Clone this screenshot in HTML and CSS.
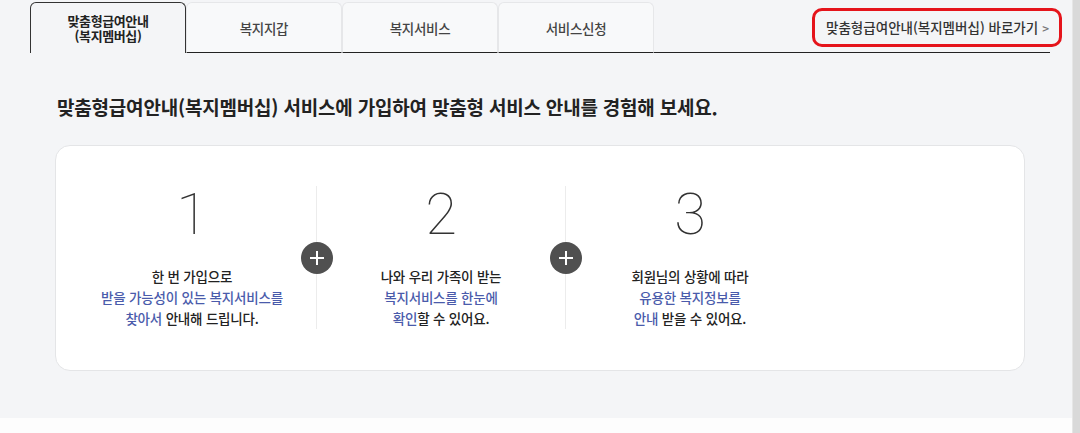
FILE: index.html
```html
<!DOCTYPE html>
<html lang="ko">

<head>
    <meta charset="UTF-8">
    <meta name="viewport" content="width=device-width, initial-scale=1.0">
    <title>맞춤형급여안내(복지멤버십)</title>
    <link rel="stylesheet" href="styles.css">
</head>

<body>
    <div class="page">
        <main class="content">
            <div class="tab-bar">
                <ul class="tabs">
                    <li class="tab active"><a href="#">맞춤형급여안내<br>(복지멤버십)</a></li>
                    <li class="tab"><a href="#">복지지갑</a></li>
                    <li class="tab"><a href="#">복지서비스</a></li>
                    <li class="tab"><a href="#">서비스신청</a></li>
                </ul>
                <div class="tab-fill">
                    <a class="shortcut" href="#">맞춤형급여안내(복지멤버십) 바로가기 <span class="arrow">&gt;</span></a>
                </div>
            </div>

            <h2 class="intro">맞춤형급여안내(복지멤버십) 서비스에 가입하여 맞춤형 서비스 안내를 경험해 보세요.</h2>

            <section class="steps">
                <div class="step">
                    <div class="step-num">1</div>
                    <p class="step-text">한 번 가입으로<br><em>받을 가능성이 있는 복지서비스를</em><br><em>찾아서</em> 안내해 드립니다.</p>
                </div>
                <div class="step-sep">
                    <svg class="plus" width="32" height="32" viewBox="0 0 32 32">
                        <circle cx="16" cy="16" r="16" fill="#505050" />
                        <path d="M16 9v14M9 16h14" stroke="#fff" stroke-width="2" />
                    </svg>
                </div>
                <div class="step">
                    <div class="step-num">2</div>
                    <p class="step-text">나와 우리 가족이 받는<br><em>복지서비스를 한눈에</em><br><em>확인</em>할 수 있어요.</p>
                </div>
                <div class="step-sep">
                    <svg class="plus" width="32" height="32" viewBox="0 0 32 32">
                        <circle cx="16" cy="16" r="16" fill="#505050" />
                        <path d="M16 9v14M9 16h14" stroke="#fff" stroke-width="2" />
                    </svg>
                </div>
                <div class="step">
                    <div class="step-num">3</div>
                    <p class="step-text">회원님의 상황에 따라<br><em>유용한 복지정보를</em><br><em>안내</em> 받을 수 있어요.</p>
                </div>
            </section>
        </main>
        <div class="scrollbar"></div>
    </div>
</body>

</html>
```

FILE: styles.css
```css
* {
    margin: 0;
    padding: 0;
    box-sizing: border-box;
}

body {
    background-color: #fdfdfd;
    font-family: "Noto Sans CJK KR", "Noto Sans", sans-serif;
    color: #222;
}

a {
    color: inherit;
    text-decoration: none;
}

ul {
    list-style: none;
}

.page {
    display: flex;
    height: 433px;
}

.content {
    flex: 1;
    height: 418px;
    background-color: #f4f5f7;
}

.scrollbar {
    width: 8px;
    background-color: #d9d9d9;
    border-left: 1px solid #e6e6e6;
}

/* tabs */
.tab-bar {
    display: flex;
    margin: 0 22px 0 30px;
    padding-top: 2px;
    height: 53px;
}

.tabs {
    display: flex;
}

.tab {
    width: 156px;
    border: 1px solid #e6e7e9;
    border-bottom: 1px solid #222;
    border-radius: 6px 6px 0 0;
    background-color: #f8f9fa;
}

.tab a {
    display: flex;
    align-items: center;
    justify-content: center;
    height: 100%;
    font-size: 13.5px;
    font-weight: 500;
    letter-spacing: -0.3px;
    color: #444;
    text-align: center;
}

.tab.active {
    border-color: #333;
    border-bottom: none;
    background-color: #f4f5f7;
}

.tab.active a {
    font-size: 13px;
    font-weight: 700;
    line-height: 15px;
    letter-spacing: -0.4px;
    color: #222;
}

.tab-fill {
    flex: 1;
    display: flex;
    align-items: center;
    justify-content: flex-end;
    border-bottom: 1px solid #222;
}

.shortcut {
    display: flex;
    align-items: center;
    height: 39px;
    margin-right: -12px;
    padding: 0 10px 0 11px;
    border: 3px solid #e5141b;
    border-radius: 10px;
    font-size: 13.5px;
    font-weight: 500;
    color: #333;
}

.shortcut .arrow {
    margin-left: 4px;
    color: #777;
    font-size: 12px;
}

/* intro */
.intro {
    margin: 40px 0 24px 57px;
    font-size: 19px;
    line-height: 28px;
    font-weight: 700;
    letter-spacing: -0.2px;
    color: #222;
}

/* steps card */
.steps {
    display: flex;
    width: 970px;
    margin-left: 55px;
    padding: 40px 12px 41px;
    background-color: #fff;
    border: 1px solid #e4e5e7;
    border-radius: 15px;
}

.step {
    width: 248px;
    text-align: center;
}

.step-num {
    font-family: Roboto, "Noto Sans CJK KR", sans-serif;
    font-size: 58px;
    line-height: 56px;
    font-weight: 100;
    color: #333;
}

.step-text {
    margin-top: 24px;
    font-size: 13.5px;
    line-height: 21px;
    font-weight: 500;
    letter-spacing: -0.2px;
    color: #222;
}

.step-text em {
    font-style: normal;
    color: #4a5bab;
}

.step-sep {
    position: relative;
    width: 0;
    border-left: 1px solid #ececec;
}

.plus {
    position: absolute;
    top: 56px;
    left: -16.5px;
}
```
